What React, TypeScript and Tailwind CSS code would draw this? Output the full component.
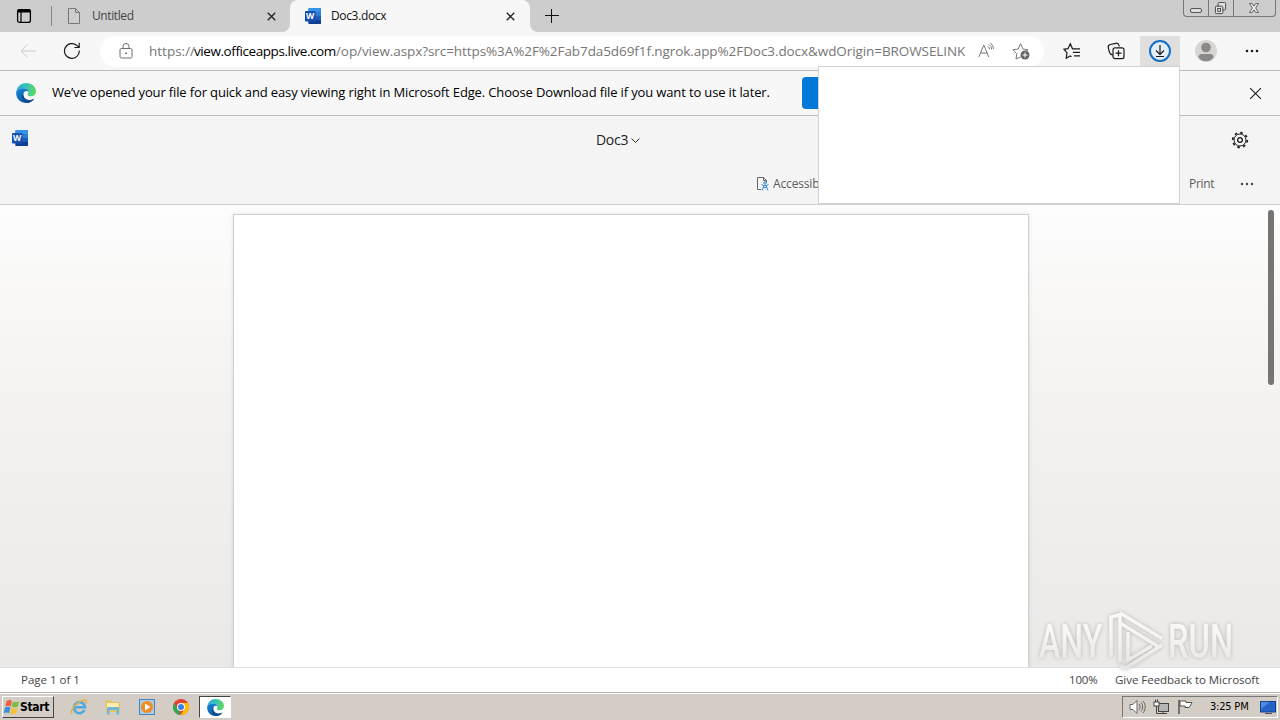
import React from 'react';

type IconProps = { className?: string };

const WordIcon: React.FC<IconProps> = ({ className }) => (
  <svg viewBox="0 0 16 16" className={className}>
    <rect x="3.5" y="0" width="12.5" height="16" rx="0.8" fill="#1b5cbe" />
    <path d="M3.5 0.8a.8.8 0 0 1 .8-.8h10.9a.8.8 0 0 1 .8.8V4H3.5z" fill="#3592e4" />
    <rect x="3.5" y="4" width="12.5" height="4" fill="#2b7cd3" />
    <path d="M3.5 12H16v3.2a.8.8 0 0 1-.8.8H4.3a.8.8 0 0 1-.8-.8z" fill="#103f91" />
    <rect x="0" y="3" width="10.5" height="10.5" rx="0.8" fill="#1650b0" />
    <text x="5.2" y="11.3" textAnchor="middle" fontSize="8.5" fontWeight="700" fontFamily="Open Sans, sans-serif" fill="#fff">W</text>
  </svg>
);

const EdgeIcon: React.FC<IconProps & { id: string }> = ({ className, id }) => (
  <svg viewBox="0 0 20 20" className={className}>
    <defs>
      <linearGradient id={`${id}-top`} x1="0" y1="0.3" x2="1" y2="0.4">
        <stop offset="0" stopColor="#2aa5dc" />
        <stop offset="0.5" stopColor="#36c5b5" />
        <stop offset="1" stopColor="#61d95b" />
      </linearGradient>
      <linearGradient id={`${id}-low`} x1="0" y1="0" x2="0.8" y2="1">
        <stop offset="0" stopColor="#1388d8" />
        <stop offset="1" stopColor="#0c4f9c" />
      </linearGradient>
    </defs>
    <path d="M.2 9.5C.6 4 5 0 10.2 0 16 0 20 4 20 8.2c0 3-2.2 5-5.2 5-2 0-3.3-.7-3.3-1.5 0-.6.9-.9.9-2.5C12.4 7 10.2 5.2 7.2 5.2 3.5 5.2.8 7 .2 9.5z" fill={`url(#${id}-top)`} />
    <path d="M.2 9.5C.8 6.8 3.6 5.2 7.2 5.2c3 0 5 1.7 5.3 3.6C11.7 8 10.8 7.8 10 7.9c-1.7.3-2.9 2-2.7 4.2.3 3.3 3.6 5.5 7 5.1 1.6-.2 2.9-.8 3.9-1.4C16.500 18.500 13.500 20 10.200 20 4.500 20-.2 15.400.2 9.500z" fill={`url(#${id}-low)`} />
    <path d="M7.300 12.100c.3 3.300 3.600 5.500 7 5.100 1.600-.2 2.900-.8 3.900-1.400-1.500 2.400-4.500 4.200-7.400 4.200C6.500 18.500 4.500 13.500 7.300 10z" fill="#114a8b" />
  </svg>
);

const CloseIcon: React.FC<IconProps> = ({ className }) => (
  <svg viewBox="0 0 12 12" className={className} stroke="currentColor">
    <path d="M1 1l10 10M11 1L1 11" />
  </svg>
);

const TabStrip: React.FC = () => (
  <div className="flex h-8 bg-[#f7f7f7] text-[12px]">
    <div className="flex w-[290px] items-center rounded-br-lg bg-[#cdcdcd]">
      <svg viewBox="0 0 16 16" className="ml-4 size-4" fill="none" stroke="#000">
        <rect x="1.6" y="1.6" width="12.8" height="12.8" rx="2" strokeWidth="1.3" />
        <path d="M1.6 3.5h12.8M1.6 2.5h12.8" strokeWidth="2.2" />
        <path d="M5 4v10" strokeWidth="1.2" />
      </svg>
      <div className="ml-[19px] h-5 w-px bg-[#858585]" />
      <svg viewBox="0 0 12 16" className="ml-4 h-4 w-3" fill="none" stroke="#777">
        <path d="M.5.5h7l4 4v11H.5zM7.5.5v4h4" />
      </svg>
      <span className="ml-3 tracking-[-0.4px] text-[#454545]">Untitled</span>
      <CloseIcon className="mr-[14px] ml-auto size-[9px] stroke-[1.8] text-[#222]" />
    </div>
    <div className="flex w-[240px] bg-[#cdcdcd]">
      <div className="flex w-full items-center rounded-t-lg bg-[#f7f7f7]">
        <WordIcon className="ml-[15px] size-4" />
        <span className="ml-[10px] tracking-[-0.35px] text-[#111]">Doc3.docx</span>
        <CloseIcon className="mr-[15px] ml-auto size-[9px] stroke-[1.8] text-[#222]" />
      </div>
    </div>
    <div className="flex flex-1 rounded-bl-lg bg-[#cdcdcd]">
      <svg viewBox="0 0 14 14" className="mt-[9px] ml-[15px] size-[14px]" stroke="#111">
        <path d="M6.5 0v14M0 6.5h14" />
      </svg>
      <div className="mr-1 ml-auto flex h-[17px] w-[93px] rounded-b border border-t-0 border-[#777] text-[#555]">
        <div className="w-[25px] border-r border-[#777]">
          <div className="mt-2 ml-[6px] h-[5px] w-3 rounded-[2px] border border-[#555] bg-[#ddd]" />
        </div>
        <div className="w-[25px] border-r border-[#777]">
          <svg viewBox="0 0 14 14" className="mt-[2px] ml-[5px] size-[13px]" fill="#e0e0e0" stroke="#444">
            <rect x="4.5" y=".5" width="8" height="8" rx="1" />
            <rect x="1.5" y="4.5" width="8" height="8" rx="1" />
            <rect x="4" y="7" width="3" height="3" />
          </svg>
        </div>
        <svg viewBox="0 0 12 11" className="mt-[3px] ml-[14px] h-[10px] w-3" fill="#eee" stroke="#555">
          <path d="M1 .5h3l2 3 2-3h3L7.8 5.5l3.2 5H8l-2-3-2 3H1l3.2-5z" />
        </svg>
      </div>
    </div>
  </div>
);

const Toolbar: React.FC = () => (
  <div className="flex h-[39px] items-center border-b border-[#bdbdbd] bg-[#f7f7f7]">
    <svg viewBox="0 0 16 14" className="ml-5 h-[14px] w-4" fill="none" stroke="#cbcbcb">
      <path d="M16 7H1M7.5.5L1 7l6.5 6.5" />
    </svg>
    <svg viewBox="0 0 18 18" className="ml-[27px] size-[18px]" fill="none" stroke="#1b1b1b" strokeWidth="1.2">
      <path d="M16.3 8.6A7.4 7.4 0 1 1 13.8 3.4L16 5.3M16.2.8v4.7h-4.8" />
    </svg>
    <div className="ml-[19px] flex h-[31px] w-[944px] items-center rounded-full bg-white text-[13.5px] whitespace-nowrap">
      <svg viewBox="0 0 14 16" className="ml-[19px] h-4 w-[14px]" fill="none" stroke="#6d6d6d">
        <rect x="1" y="5.5" width="12" height="9.5" rx="1.5" />
        <path d="M4 5.5V3.5a3 3 0 0 1 6 0v2" />
        <circle cx="7" cy="10.3" r=".6" fill="#6d6d6d" />
      </svg>
      <div className="ml-4 flex w-[829px] text-[#767676]">
        <span className="w-[45px]">https://</span>
        <span className="w-[142px] tracking-[-0.43px] text-black">view.officeapps.live.com</span>
        <span className="tracking-[-0.08px]">/op/view.aspx?src=https%3A%2F%2Fab7da5d69f1f.ngrok.app%2FDoc3.docx&amp;wdOrigin=BROWSELINK</span>
      </div>
      <svg viewBox="0 0 17 16" className="h-4 w-[17px]" fill="none" stroke="#777">
        <path d="M.8 14L5.8 2l5 12M2.5 10h6.6M10 3.5a4 4 0 0 1 1.5 3M11 1.5a6 6 0 0 1 2.7 5M12.5 0a8 8 0 0 1 3 6" />
      </svg>
      <svg viewBox="0 0 18 18" className="ml-[17px] size-[18px]" fill="none" stroke="#777">
        <path d="M8.5 15l-4.5 2 .8-5.3L1 7.8l5.2-.8L8.6 1.7 11 7l5 .8-2 1.7" />
        <circle cx="13" cy="13" r="4.5" fill="#666" stroke="none" />
        <path d="M13 10.5v5M10.5 13h5" stroke="#fff" />
      </svg>
    </div>
    <svg viewBox="0 0 18 18" className="ml-[19px] size-[18px]" fill="none" stroke="#1b1b1b" strokeWidth="1.2">
      <path d="M12 6.8H9.5L7.3 1.8 5 6.7l-4 .6 3 3.6-.8 5.3 4-2.2 1.3.7M11 6.8h6M10 10.3h7M11 13.8h6" />
    </svg>
    <svg viewBox="0 0 18 18" className="ml-[26px] size-[18px]" fill="none" stroke="#1b1b1b" strokeWidth="1.2">
      <path d="M6 13c-2.3-.4-3.2-1.5-3.6-3L1.3 5.8C.9 4 1.8 2.9 3.2 2.5L9 1.3c1.5-.3 2.6.5 3 2l.2 1.2" />
      <rect x="6" y="5.8" width="11" height="10.8" rx="2" />
      <path d="M11.5 8.2v6M8.5 11.2h6" />
    </svg>
    <div className="ml-[15px] flex h-full w-10 items-center justify-center rounded-t bg-[#e1dfde] bg-clip-content pt-1">
      <svg viewBox="0 0 24 24" className="-mt-1 size-6" fill="none" stroke="#1b1b1b">
        <circle cx="12" cy="12" r="10" fill="#e3edf6" stroke="#1370c4" strokeWidth="2" />
        <path d="M12 6v9M8 11.5l4 4 4-4M8 17.5h8" strokeWidth="1.2" />
      </svg>
    </div>
    <svg viewBox="0 0 22 22" className="ml-[15px] size-[22px]">
      <circle cx="11" cy="11" r="11" fill="#d8d6d5" />
      <circle cx="11" cy="7.5" r="4.8" fill="#8b8988" />
      <path d="M3.5 17c0-2 1.5-3 3-3h9c1.5 0 3 1 3 3-1.5 3-4 4.3-7.5 4.3S5 20 3.5 17z" fill="#8b8988" />
    </svg>
    <svg viewBox="0 0 14 4" className="ml-7 h-1 w-[14px]" fill="#1b1b1b">
      <circle cx="2" cy="2" r="1.3" />
      <circle cx="7" cy="2" r="1.3" />
      <circle cx="12" cy="2" r="1.3" />
    </svg>
  </div>
);

const NoticeBar: React.FC = () => (
  <div className="flex h-[45px] items-center border-b border-[#bdbdbd] bg-[#f7f7f7] text-[13px]">
    <EdgeIcon id="notice" className="ml-4 size-5" />
    <span className="ml-4 w-[750px] tracking-[-0.14px] whitespace-nowrap text-black">
      We’ve opened your file for quick and easy viewing right in Microsoft Edge. Choose Download file if you want to use it later.
    </span>
    <div className="h-8 w-[110px] rounded bg-[#0078d7]" />
    <CloseIcon className="mr-[18px] ml-auto size-[13px] text-[#1b1b1b]" />
  </div>
);

const DocumentHeader: React.FC = () => (
  <div className="flex h-[89px] flex-col border-b border-[#cfcfcf] bg-[#f4f4f4]">
    <div className="flex h-12 items-center">
      <WordIcon className="mb-1 ml-3 size-4" />
      <span className="mb-px ml-[568px] w-[32px] text-[14px] tracking-[-0.3px] text-[#222]">Doc3</span>
      <svg viewBox="0 0 9 6" className="mt-[2px] ml-[3px] h-[6px] w-[9px]" fill="none" stroke="#333">
        <path d="M.5.5l4 4 4-4" />
      </svg>
      {/* Settings gear */}
      <svg viewBox="0 0 18 18" className="mr-[31px] ml-auto size-[18px]" fill="none" stroke="#1b1b1b">
        <circle cx="9" cy="9" r="2.3" strokeWidth="1.3" />
        <circle cx="9" cy="9" r="6" />
        <circle cx="9" cy="9" r="7.3" strokeWidth="1.8" strokeDasharray="2.6 3.133" />
      </svg>
    </div>
    <div className="flex h-10 items-center text-[12px] text-[#5b5b5b]">
      <svg viewBox="0 0 12 14" className="ml-[757px] h-[14px] w-3" fill="none">
        <path d="M4 12.5H.5V.5h6l3 3v2M6.5.5v3h3" stroke="#666" />
        <circle cx="8" cy="6" r="1.2" stroke="#2b88d8" />
        <path d="M4.500 7.500l2 1h3l2-1M6.500 8.500V10l-1.500 3.500M9.500 8.500V10l1.500 3.500M6.500 10.500h3" stroke="#2b88d8" />
      </svg>
      <span className="ml-1 w-[415px] tracking-[-0.15px]">Accessibility Mode</span>
      <span className="ml-[1px] tracking-[-0.3px]">Print</span>
      <svg viewBox="0 0 14 4" className="mr-[26px] ml-auto h-1 w-[14px]" fill="#444">
        <circle cx="2" cy="2" r="1.2" />
        <circle cx="7" cy="2" r="1.2" />
        <circle cx="12" cy="2" r="1.2" />
      </svg>
    </div>
  </div>
);

const Watermark: React.FC = () => (
  <div className="absolute top-[608px] left-[1038px] h-[66px] w-[198px] opacity-85 drop-shadow-[0_0_2px_rgba(120,120,120,0.55)]">
    <svg viewBox="0 0 198 66" className="h-[66px] w-[198px]" fill="none">
      <defs>
        <linearGradient id="mark" gradientUnits="userSpaceOnUse" x1="0" y1="5" x2="0" y2="62">
          <stop offset="0" stopColor="#fdfcfb" />
          <stop offset="0.5" stopColor="#f6f4f3" />
          <stop offset="1" stopColor="#e4e3e2" />
        </linearGradient>
        <linearGradient id="letters" x1="0" y1="0" x2="0" y2="1">
          <stop offset="0.3" stopColor="#fbfaf9" />
          <stop offset="0.9" stopColor="#e9e7e6" />
        </linearGradient>
      </defs>
      <g fontFamily="Roboto, sans-serif" fontSize="48" fontWeight="500" fill="url(#letters)">
        <text transform="translate(1 50) scale(.67 1)">ANY</text>
        <text transform="translate(130 50) scale(.68 1)">RUN</text>
      </g>
      <path d="M73 49V9l8-2M82 10v44M82 5l42 25.5M82 5v10l39 24M90 24v28l24-14M124 37L88 60l-6-2" stroke="url(#mark)" strokeWidth="3.5" />
    </svg>
  </div>
);

const StatusBar: React.FC = () => (
  <div className="flex h-[25px] items-center border-t border-[#e1e1e1] bg-white text-[11.5px] text-[#444]">
    <span className="ml-[21px]">Page 1 of 1</span>
    <span className="ml-auto w-[46px] tracking-[-0.2px]">100%</span>
    <span className="w-[165px] tracking-[-0.03px] whitespace-nowrap">Give Feedback to Microsoft</span>
  </div>
);

const Taskbar: React.FC = () => (
  <div className="flex h-7 items-center border-t border-[#b5b0a9] bg-[#d4cdc5] pt-px font-['DejaVu_Sans_Condensed','DejaVu_Sans',sans-serif] text-[11px] text-black shadow-[inset_0_1px_0_#fff]">
    <div className="ml-[2px] flex h-[22px] w-[52px] items-center border border-t-white border-r-[#444] border-b-[#444] border-l-white">
      <svg viewBox="0 0 15 15" className="ml-px size-4 shrink-0">
        <path d="M2.5 1.800c2-1.300 3.500-1 5 0L6.300 7c-1.500-1-3-1-5 0z" fill="#e8613a" />
        <path d="M8.300 2.300c2 1 4 1 6-.3L13 7c-2 1.200-4 1-5.800.2z" fill="#7dbb42" />
        <path d="M1 8c2-1.200 3.500-1 5 0l-1.300 5.300c-1.500-1-3-1-5 0z" fill="#3d8ddb" />
        <path d="M7 8.300c2 1 3.800 1 5.800-.2l-1.300 5.300c-2 1.200-4 1-5.800.2z" fill="#f5c13c" />
      </svg>
      <span className="text-[12px] font-bold tracking-[-0.35px]">Start</span>
    </div>
    <svg viewBox="0 0 18 18" className="ml-4 size-[18px]" fill="none">
      <path d="M14.5 12A5.500 5.500 0 1 1 15 9.300H5" stroke="#4fa9e0" strokeWidth="2.600" />
      <path d="M2 16C-1 12 9 2 15.500 2c1.500.5 1 2 .5 3.500" stroke="#e3b23c" strokeWidth="1.400" />
    </svg>
    <svg viewBox="0 0 18 18" className="ml-4 size-[18px]">
      <path d="M1.5 2.5h6l1 1.500h7.500V14h-14.500z" fill="#e3c566" />
      <rect x="3" y="5" width="11.5" height="5" fill="#fbeeb0" />
      <path d="M3 16.5V10.500c0-1 .7-1.500 1.500-1.500h9c.8 0 1.500.5 1.500 1.500v6h-2.500V12h-7v4.500z" fill="#6fb6de" />
    </svg>
    <svg viewBox="0 0 18 18" className="ml-4 size-[18px]">
      <rect x="1.5" y="1.5" width="15" height="15" fill="#a8cdec" stroke="#4c83bb" />
      <circle cx="9" cy="9" r="6" fill="#f38b1e" />
      <path d="M7 5.5l5.500 3.500L7 12.500z" fill="#fff" />
    </svg>
    <svg viewBox="0 0 18 18" className="ml-4 size-[18px]">
      <circle cx="9" cy="9" r="8" fill="#e34133" />
      <path d="M2 5l5 8 1.500 4A8 8 0 0 1 2 5z" fill="#2da94f" />
      <path d="M9 5h7a8 8 0 0 1-7.500 12l4-6z" fill="#fdbd00" />
      <circle cx="9" cy="9" r="4" fill="#fff" />
      <circle cx="9" cy="9" r="3" fill="#3c7fe8" />
    </svg>
    <div className="ml-[9px] flex h-[22px] w-8 items-center justify-center border border-t-[#444] border-r-white border-b-white border-l-[#444] bg-white">
      <EdgeIcon id="task" className="size-[17px]" />
    </div>
    <div className="mr-[2px] ml-auto flex h-[22px] w-[156px] items-center border border-t-[#777] border-r-white border-b-white border-l-[#777]">
      <svg viewBox="0 0 17 16" className="ml-[6px] h-4 w-[17px] shrink-0" fill="none" stroke="#666">
        <path d="M1 5.5h3l4-4v13l-4-4H1z" fill="#fff" />
        <path d="M10 5c1.5 2 1.5 4 0 6M12 3.5c2.3 3 2.3 6 0 9M14 2c3 4 3 8 0 12" />
      </svg>
      <svg viewBox="0 0 16 16" className="ml-[7px] size-4 shrink-0" fill="none" stroke="#444">
        <rect x="5.5" y="4.5" width="10" height="8" fill="#b5b5b5" />
        <rect x="1" y="3" width="5" height="4" fill="#fff" />
        <path d="M2.5 3V.5M4.5 3V.5M3.5 7v7.500H14M10 12v2" />
      </svg>
      <svg viewBox="0 0 16 16" className="ml-2 size-4 shrink-0" stroke="#555">
        <path d="M2 1v14" strokeWidth="1.5" />
        <path d="M3 2h6v1.5h6l-2 3.5-1 1.5H8V7H3z" fill="#fff" />
      </svg>
      <span className="ml-[17px] w-[50px] tracking-[-0.2px] whitespace-nowrap">3:25 PM</span>
      <svg viewBox="0 0 16 13" className="h-[13px] w-4 shrink-0">
        <rect x=".5" y=".5" width="15" height="10.5" fill="#2463c7" stroke="#173f89" />
        <path d="M1 8L10 1H1z" fill="#4f8be0" />
        <path d="M5 12.5h7" stroke="#555" />
      </svg>
    </div>
  </div>
);

const App: React.FC = () => {
  return (
    <div className="relative flex h-[720px] w-[1280px] flex-col overflow-hidden font-['Open_Sans','Noto_Sans',sans-serif]">
      <TabStrip />
      <Toolbar />
      <NoticeBar />
      <DocumentHeader />
      <main className="flex min-h-0 flex-1 overflow-hidden bg-linear-to-b from-[#fdfdfd] via-[#f5f3f1] via-40% to-[#ebe9e8]">
        <div className="mt-[9px] ml-[233px] h-[600px] w-[796px] border border-[#d0d0d0] bg-white shadow-[0_0_4px_rgba(0,0,0,0.12)]" />
        <div className="mt-[5px] mr-[6px] ml-auto h-[175px] w-[6px] rounded-full bg-[#777472]" />
      </main>
      <StatusBar />
      <Taskbar />
      {/* Downloads flyout */}
      <div className="absolute top-[66px] left-[818px] h-[138px] w-[362px] border border-[#d2d2d2] bg-white" />
      <Watermark />
    </div>
  );
};

export default App;
